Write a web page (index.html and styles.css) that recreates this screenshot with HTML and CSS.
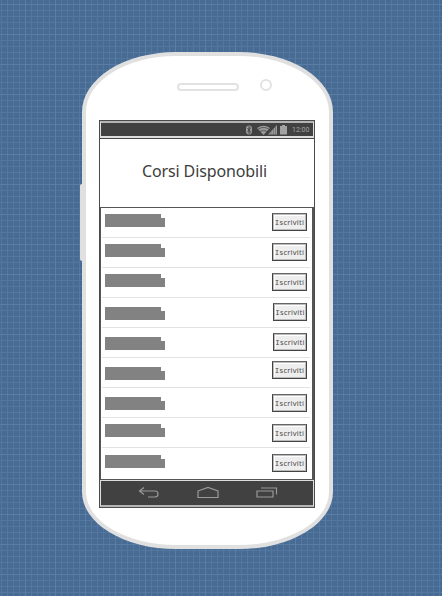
FILE: index.html
```
<!DOCTYPE html>
<html lang="it">
<head>
<meta charset="utf-8">
<title>Corsi Disponobili</title>
<link rel="stylesheet" href="styles.css">
</head>
<body>
<main class="phone">
  <span class="side-key"></span>
  <div class="top"><span class="speaker"></span><span class="camera"></span></div>
  <section class="screen">
    <div class="status">
      <svg class="status-icons" width="44" height="12" viewBox="0 0 44 12">
        <rect x="1" y="1.500" width="6" height="9" rx="3" fill="#999"/>
        <path d="M2.500 4l3 4-1.500 1.500v-7L5.500 4l-3 4" fill="none" stroke="#414141" stroke-width=".9"/>
        <path d="M12 4Q18.500-.5 25 4L18.500 11Z" fill="#999"/>
        <path d="M13 5.200q5.500-3.500 11 0M15 7.400q3.500-2 7 0" fill="none" stroke="#414141" stroke-width=".7"/>
        <path d="M23 10.500L32 1v9.500Z" fill="#999"/>
        <path d="M26 6v5M28.500 4v7M30.500 3v8" stroke="#555" stroke-width=".5"/>
        <path d="M35 2h2V1h3v1h2v8.500h-7Z" fill="#a2a2a2"/>
      </svg>
      <span class="clock">12:00</span>
    </div>
    <h1 class="title">Corsi Disponobili</h1>
    <ul class="courses">
      <li class="course"><span class="name"></span><button class="enroll"><span class="cap">I</span>scriviti</button></li>
      <li class="course"><span class="name"></span><button class="enroll"><span class="cap">I</span>scriviti</button></li>
      <li class="course"><span class="name"></span><button class="enroll"><span class="cap">I</span>scriviti</button></li>
      <li class="course"><span class="name low"></span><button class="enroll narrow"><span class="cap">I</span>scriviti</button></li>
      <li class="course"><span class="name low"></span><button class="enroll narrow"><span class="cap">I</span>scriviti</button></li>
      <li class="course"><span class="name low"></span><button class="enroll raised"><span class="cap">I</span>scriviti</button></li>
      <li class="course"><span class="name low"></span><button class="enroll lowered"><span class="cap">I</span>scriviti</button></li>
      <li class="course"><span class="name"></span><button class="enroll lowered"><span class="cap">I</span>scriviti</button></li>
      <li class="course"><span class="name mid"></span><button class="enroll lowered"><span class="cap">I</span>scriviti</button></li>
    </ul>
    <nav class="nav">
      <svg width="22" height="14" viewBox="0 0 22 14"><path d="M6 1.500L1.500 5 6 8.500M1.500 5H17q3 0 3 3t-3 3h-7" /></svg>
      <svg width="22" height="14" viewBox="0 0 22 14"><path d="M1 5L11 1.500 21 5v6.500H1Z"/></svg>
      <svg width="22" height="14" viewBox="0 0 22 14"><path d="M1 5h16v6H1ZM5 2h15.500v6.500"/></svg>
    </nav>
  </section>
</main>
</body>
</html>
```

FILE: styles.css
```
* { box-sizing: border-box; }

body {
  margin: 0;
  height: 596px;
  overflow: hidden;
  padding: 52px 0 0 82px;
  background-color: #476b93;
  background-image:
    linear-gradient(90deg, #5a7da5 1px, transparent 1px),
    linear-gradient(#5a7da5 1px, transparent 1px),
    linear-gradient(90deg, #54779f 1px, transparent 1px),
    linear-gradient(#54779f 1px, transparent 1px);
  background-size: 30px 30px, 30px 30px, 6px 6px, 6px 6px;
  background-position: 25px 0, 0 4px, 1px 0, 0 4px;
  font-family: "Noto Sans", sans-serif;
}

.phone {
  position: relative;
  width: 251px;
  height: 497px;
  padding: 0 13px;
  border: 4px solid #e0e0e0;
  border-radius: 94px 94px 94px 94px / 60px 60px 57px 57px;
  background: #fff;
}

.side-key {
  position: absolute;
  left: -6px;
  top: 128px;
  width: 3px;
  height: 77px;
  border-radius: 2px 0 0 2px;
  background: #e0e0e0;
}

.top {
  display: flex;
  align-items: flex-start;
  height: 64px;
  padding: 23px 0 0 78px;
}

.speaker {
  width: 62px;
  height: 8px;
  margin-top: 4px;
  border: 2px solid #e2e2e2;
  border-radius: 4px;
}

.camera {
  width: 12px;
  height: 12px;
  margin-left: 21px;
  border: 2px solid #e2e2e2;
  border-radius: 50%;
}

.screen {
  display: flex;
  flex-direction: column;
  width: 216px;
  height: 388px;
  border: 1px solid #4b4b4b;
}

.status {
  display: flex;
  align-items: center;
  justify-content: flex-end;
  height: 17px;
  padding-right: 3px;
  border: 1px solid #ddd;
  border-top: 2px solid #b5b5b5;
  border-bottom-width: 2px;
  background: #414141;
  box-shadow: 0 1px #454545;
}

.clock {
  width: 18px;
  margin-left: 3px;
  color: #a2a2a2;
  font: 7px/12px Roboto, sans-serif;
  white-space: nowrap;
}

.title {
  height: 69px;
  margin: 0;
  padding-right: 5px;
  color: #3d3d3d;
  font-size: 16px;
  font-weight: 400;
  line-height: 67px;
  letter-spacing: -.12px;
  text-align: center;
}

.courses {
  height: 273px;
  margin: 0;
  padding: 0;
  border: 1px solid #555;
  border-width: 1px 2px 1px 1px;
  list-style: none;
}

.course {
  display: flex;
  align-items: flex-start;
  justify-content: space-between;
  height: 30px;
  margin: 0 2px 0 1px;
  padding: 1px 3px 0;
  border-bottom: 1px solid #e2e2e2;
}

.course:last-child { border-bottom: 0; }

.name {
  width: 60px;
  height: 13px;
  margin-top: 5px;
  background: #828282;
  clip-path: polygon(0 0, 56px 0, 56px 4px, 100% 4px, 100% 100%, 0 100%);
}

.name.mid { margin-top: 6px; }
.name.low { margin-top: 8px; }

.enroll {
  width: 35px;
  height: 18px;
  margin: 4px 0 0;
  padding: 0;
  border: 1px solid #444;
  border-top-color: #666;
  background: #eee;
  box-shadow: inset 0 0 0 1px #bbb, inset 2px 2px #fff;
  color: #4c4c4c;
  font: 7.5px/16px "Noto Sans", sans-serif;
  letter-spacing: .25px;
  white-space: nowrap;
}

.enroll.narrow { width: 34px; }
.enroll.raised { margin-top: 2px; }
.enroll.lowered { margin-top: 5px; }

.cap { font-family: "Liberation Mono", monospace; }

.nav {
  display: flex;
  align-items: center;
  justify-content: space-between;
  flex: 1;
  padding: 0 35px 0 37px;
  border: 1px solid #ddd;
  border-bottom: 2px solid #b5b5b5;
  background: #414141;
}

.nav svg {
  fill: none;
  stroke: #999;
  stroke-width: 1.2;
}
```
